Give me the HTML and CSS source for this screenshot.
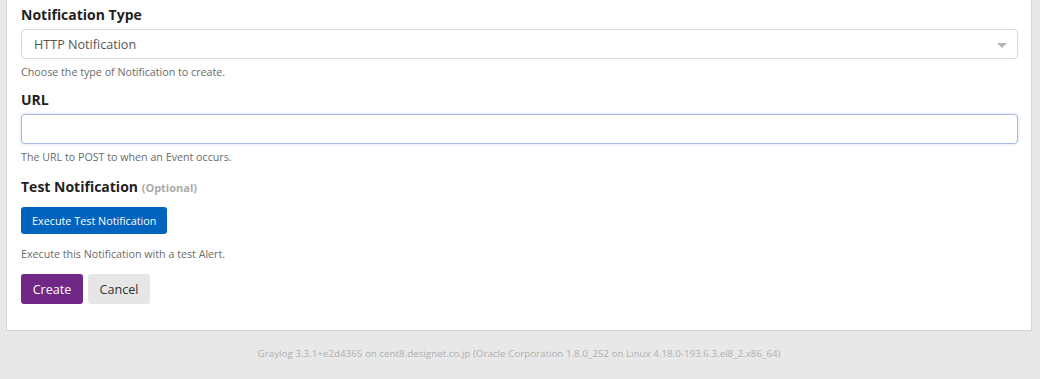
FILE: index.html
```html
<!DOCTYPE html>
<html lang="en">
<head>
    <meta charset="utf-8" />
    <title>New Notification</title>
    <link rel="stylesheet" href="styles.css">
</head>
<body>
    <div class="content">
        <form class="notification-form">
            <div class="form-group">
                <label class="control-label" for="type-select">Notification Type</label>
                <div class="select-box" id="type-select">
                    <span class="select-value">HTTP Notification</span>
                    <span class="select-arrow"></span>
                </div>
                <p class="help-block">Choose the type of Notification to create.</p>
            </div>

            <div class="form-group">
                <label class="control-label" for="url-inp">URL</label>
                <input type="text" id="url-inp" class="form-control focused" />
                <p class="help-block">The URL to POST to when an Event occurs.</p>
            </div>

            <div class="form-group test-group">
                <label class="control-label">Test Notification <small class="optional">(Optional)</small></label>
                <div>
                    <button type="button" class="btn btn-info">Execute Test Notification</button>
                </div>
                <p class="help-block spaced">Execute this Notification with a test Alert.</p>
            </div>

            <div class="button-toolbar">
                <button type="button" class="btn btn-primary">Create</button>
                <button type="button" class="btn btn-default">Cancel</button>
            </div>
        </form>
    </div>

    <footer class="footer">
        Graylog 3.3.1+e2d4365 on cent8.designet.co.jp (Oracle Corporation 1.8.0_252 on Linux 4.18.0-193.6.3.el8_2.x86_64)
    </footer>
</body>
</html>
```

FILE: styles.css
```css
* {
    padding: 0;
    margin: 0;
    box-sizing: border-box;
    font-family: "Open Sans", sans-serif;
}

body {
    background-color: #e8e8e8;
    padding: 0 8px 0 6px;
}

.content {
    background-color: #fff;
    border: 1px solid #d4d4d4;
    border-top: none;
    padding: 5px 13px 26px 14px;
}

.form-group {
    margin-bottom: 10px;
}

    .form-group.test-group {
        padding-top: 2px;
    }

.control-label {
    display: block;
    font-size: 14px;
    font-weight: 700;
    line-height: 20px;
    color: #1f1f1f;
    margin-bottom: 4px;
}

    .control-label .optional {
        font-size: 11px;
        color: #aaa;
        font-weight: 700;
    }

.select-box {
    display: flex;
    justify-content: space-between;
    align-items: center;
    height: 30px;
    border: 1px solid #d9d9d9;
    border-radius: 4px;
    padding: 0 10px 0 12px;
    font-size: 12.6px;
    color: #555;
}

.select-arrow {
    width: 0;
    height: 0;
    border-left: 5px solid transparent;
    border-right: 5px solid transparent;
    border-top: 5px solid #b5b5b5;
    margin-top: 2px;
}

.form-control {
    display: block;
    width: 100%;
    height: 30px;
    border: 1px solid #d9d9d9;
    border-radius: 4px;
    padding: 0 12px;
    font-size: 13px;
    outline: none;
}

    .form-control.focused {
        border-color: #a6b9e3;
        box-shadow: 0 0 3px rgba(100, 140, 220, 0.35);
    }

.help-block {
    font-size: 10.7px;
    line-height: 16px;
    color: #6b6b6b;
    margin-top: 5px;
}

    .help-block.spaced {
        margin-top: 12px;
        margin-bottom: 12px;
    }

.btn {
    display: inline-block;
    border: none;
    border-radius: 3px;
    cursor: pointer;
}

.btn-info {
    background-color: #0063be;
    color: #fff;
    font-size: 10.8px;
    height: 27px;
    padding: 0 11px;
    margin-top: 5px;
}

.button-toolbar {
    display: flex;
    gap: 5px;
}

.btn-primary,
.btn-default {
    height: 30px;
    width: 62px;
    font-size: 12.6px;
}

.btn-primary {
    background-color: #702785;
    color: #fff;
}

.btn-default {
    background-color: #e6e6e6;
    color: #333;
}

.footer {
    text-align: center;
    font-size: 9.8px;
    color: #b0b0b0;
    padding: 16px 0;
}
```
